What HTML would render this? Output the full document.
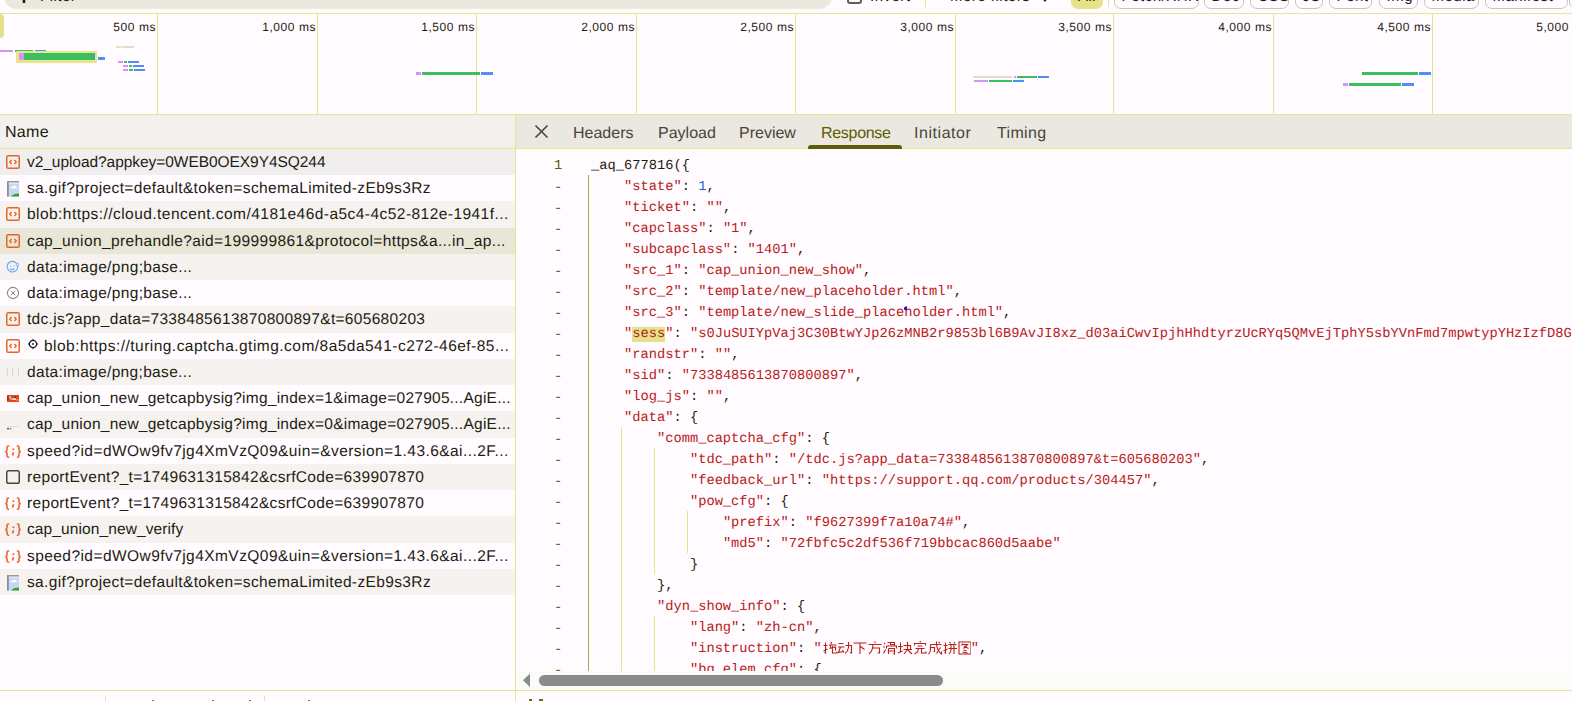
<!DOCTYPE html>
<html><head><meta charset="utf-8"><style>
*{margin:0;padding:0;box-sizing:border-box}
html,body{text-rendering:geometricPrecision;width:1572px;height:701px;overflow:hidden;background:#fffbfe;font-family:"Liberation Sans",sans-serif;color:#1e1c13}
.a{position:absolute}
.yl{position:absolute;background:#e8e58f}
#filter{left:4px;top:-16px;width:828px;height:25px;border-radius:12.5px;background:#ebe8e0}
.chip{position:absolute;top:-17px;height:26px;border:1px solid #c9c6b6;border-radius:7px}
.tl{position:absolute;top:19px;font-size:12px;letter-spacing:0.55px;color:#1e1c13;text-align:right;width:100px;line-height:16px;white-space:nowrap}
.p{background:#d493f7}.g{background:#3cbd5e}.b{background:#4f8ef5}.t{background:#e2dfc8}
.row{position:absolute;left:0;width:515px;overflow:hidden;font-size:15.5px;white-space:nowrap;color:#1e1c13}
.row span.tx{position:absolute;left:27px}
.odd{background:#f5f2f0}
.tab{position:absolute;top:117px;font-size:16px;line-height:33px;color:#47463a;white-space:nowrap}
.cl{position:absolute;left:591px;font-family:"Liberation Mono",monospace;font-size:13.74px;line-height:21px;height:21px;white-space:pre;color:#1e1c13}
.ln{position:absolute;left:554px;width:10px;font-family:"Liberation Mono",monospace;font-size:13.74px;line-height:21px;color:#5e5c0d}
.s{color:#b8211a}.n{color:#1967d2}
.hl{background:#e5e38a}
.gd{position:absolute;width:1px}
</style></head><body>
<div class="a" id="filter"></div>
<svg class="a" style="left:16px;top:-12px" width="16" height="16" viewBox="0 0 16 16"><path d="M1 1 H15 L9.3 8 V15 H6.7 V8 Z" fill="#1e1c13"/></svg>
<div class="a" style="left:40px;top:-10.70px;font-size:15px;line-height:15px;color:#1e1c13;white-space:nowrap;letter-spacing:0.5px">Filter</div>
<div class="a" style="left:847px;top:-11px;width:15px;height:15px;border:2px solid #5e5d52;border-radius:3px"></div>
<div class="a" style="left:870px;top:-10.70px;font-size:15px;line-height:15px;color:#1e1c13;white-space:nowrap;letter-spacing:0.5px">Invert</div>
<div class="yl" style="left:925px;top:0;width:1px;height:7px"></div>
<div class="a" style="left:950px;top:-10.70px;font-size:15px;line-height:15px;color:#1e1c13;white-space:nowrap;letter-spacing:0.5px">More filters</div>
<svg class="a" style="left:1041px;top:-3px" width="8" height="6" viewBox="0 0 8 6"><path d="M0 0 H8 L4 5 Z" fill="#1e1c13"/></svg>
<div class="a" style="left:1071px;top:-17px;width:32px;height:26px;border-radius:7px;background:#e5e38a"></div>
<div class="a" style="left:1078px;top:-10.70px;font-size:15px;line-height:15px;color:#1e1c13;white-space:nowrap;letter-spacing:0.5px">All</div>
<div class="yl" style="left:1108px;top:0;width:1px;height:7px"></div>
<div class="chip" style="left:1114px;width:85px"></div>
<div class="a" style="left:1121.5px;top:-10.70px;font-size:15px;line-height:15px;color:#1e1c13;white-space:nowrap;letter-spacing:0.5px">Fetch/XHR</div>
<div class="chip" style="left:1204px;width:40px"></div>
<div class="a" style="left:1211.5px;top:-10.70px;font-size:15px;line-height:15px;color:#1e1c13;white-space:nowrap;letter-spacing:0.5px">Doc</div>
<div class="chip" style="left:1250px;width:39px"></div>
<div class="a" style="left:1257.5px;top:-10.70px;font-size:15px;line-height:15px;color:#1e1c13;white-space:nowrap;letter-spacing:0.5px">CSS</div>
<div class="chip" style="left:1295px;width:28px"></div>
<div class="a" style="left:1302.5px;top:-10.70px;font-size:15px;line-height:15px;color:#1e1c13;white-space:nowrap;letter-spacing:0.5px">JS</div>
<div class="chip" style="left:1329px;width:43px"></div>
<div class="a" style="left:1336.5px;top:-10.70px;font-size:15px;line-height:15px;color:#1e1c13;white-space:nowrap;letter-spacing:0.5px">Font</div>
<div class="chip" style="left:1379px;width:39px"></div>
<div class="a" style="left:1386.5px;top:-10.70px;font-size:15px;line-height:15px;color:#1e1c13;white-space:nowrap;letter-spacing:0.5px">Img</div>
<div class="chip" style="left:1424px;width:55px"></div>
<div class="a" style="left:1431.5px;top:-10.70px;font-size:15px;line-height:15px;color:#1e1c13;white-space:nowrap;letter-spacing:0.5px">Media</div>
<div class="chip" style="left:1485px;width:83px"></div>
<div class="a" style="left:1492.5px;top:-10.70px;font-size:15px;line-height:15px;color:#1e1c13;white-space:nowrap;letter-spacing:0.5px">Manifest</div>
<div class="chip" style="left:1569px;width:51px"></div>
<div class="a" style="left:1576.5px;top:-10.70px;font-size:15px;line-height:15px;color:#1e1c13;white-space:nowrap;letter-spacing:0.5px">WS</div>
<div class="yl" style="left:0;top:13px;width:1572px;height:1px"></div>
<div class="yl" style="left:0;top:114px;width:1572px;height:1px"></div>
<div class="yl" style="left:157px;top:14px;width:1px;height:100px"></div>
<div class="tl" style="left:56px">500 ms</div>
<div class="yl" style="left:317px;top:14px;width:1px;height:100px"></div>
<div class="tl" style="left:216px">1,000 ms</div>
<div class="yl" style="left:476px;top:14px;width:1px;height:100px"></div>
<div class="tl" style="left:375px">1,500 ms</div>
<div class="yl" style="left:636px;top:14px;width:1px;height:100px"></div>
<div class="tl" style="left:535px">2,000 ms</div>
<div class="yl" style="left:795px;top:14px;width:1px;height:100px"></div>
<div class="tl" style="left:694px">2,500 ms</div>
<div class="yl" style="left:955px;top:14px;width:1px;height:100px"></div>
<div class="tl" style="left:854px">3,000 ms</div>
<div class="yl" style="left:1113px;top:14px;width:1px;height:100px"></div>
<div class="tl" style="left:1012px">3,500 ms</div>
<div class="yl" style="left:1273px;top:14px;width:1px;height:100px"></div>
<div class="tl" style="left:1172px">4,000 ms</div>
<div class="yl" style="left:1432px;top:14px;width:1px;height:100px"></div>
<div class="tl" style="left:1331px">4,500 ms</div>
<div class="tl" style="left:1490px">5,000 ms</div>
<div class="a" style="left:-4px;top:14px;width:7.5px;height:24px;border-radius:4px;background:#e3e08a"></div>
<div class="a p" style="left:0px;top:50px;width:13px;height:2px;"></div>
<div class="a g" style="left:14.5px;top:50px;width:18.5px;height:2px;"></div>
<div class="a b" style="left:35px;top:50px;width:11px;height:2px;"></div>
<div class="a" style="left:16px;top:51px;width:81px;height:12px;background:#e8e48a"></div>
<div class="a p" style="left:19px;top:53px;width:5px;height:7px;"></div>
<div class="a g" style="left:24px;top:53px;width:69.5px;height:7px;"></div>
<div class="a b" style="left:93.5px;top:53px;width:1.5px;height:7px;"></div>
<div class="a b" style="left:97.5px;top:57px;width:7.5px;height:3px;"></div>
<div class="a t" style="left:116px;top:46px;width:5px;height:2px;"></div>
<div class="a t" style="left:122px;top:46px;width:11.5px;height:2px;"></div>
<div class="a p" style="left:118px;top:61px;width:5px;height:2px;"></div>
<div class="a g" style="left:124px;top:61px;width:3px;height:2px;"></div>
<div class="a b" style="left:128px;top:61px;width:11px;height:2px;"></div>
<div class="a p" style="left:123px;top:65px;width:4.5px;height:2px;"></div>
<div class="a g" style="left:128.5px;top:65px;width:3.5px;height:2px;"></div>
<div class="a b" style="left:133px;top:65px;width:11px;height:2px;"></div>
<div class="a p" style="left:123px;top:68.5px;width:5px;height:2px;"></div>
<div class="a g" style="left:129px;top:68.5px;width:4px;height:2px;"></div>
<div class="a b" style="left:134px;top:68.5px;width:11px;height:2px;"></div>
<div class="a p" style="left:416px;top:72px;width:5px;height:3px;"></div>
<div class="a g" style="left:422px;top:72px;width:58px;height:3px;"></div>
<div class="a b" style="left:481px;top:72px;width:12px;height:3px;"></div>
<div class="a t" style="left:973px;top:76px;width:39px;height:2px;"></div>
<div class="a p" style="left:1013.5px;top:76px;width:2.5px;height:2px;"></div>
<div class="a g" style="left:1017px;top:76px;width:19.5px;height:2px;"></div>
<div class="a b" style="left:1037.5px;top:76px;width:11.5px;height:2px;"></div>
<div class="a p" style="left:974px;top:80px;width:13.5px;height:2px;"></div>
<div class="a g" style="left:988.5px;top:80px;width:23.0px;height:2px;"></div>
<div class="a b" style="left:1012.5px;top:80px;width:11.5px;height:2px;"></div>
<div class="a g" style="left:1362px;top:72px;width:56px;height:3px;"></div>
<div class="a b" style="left:1419px;top:72px;width:11.5px;height:3px;"></div>
<div class="a p" style="left:1343px;top:83px;width:5px;height:3px;"></div>
<div class="a g" style="left:1349px;top:83px;width:52px;height:3px;"></div>
<div class="a b" style="left:1402px;top:83px;width:11.5px;height:3px;"></div>
<div class="a" style="left:0;top:115px;width:515px;height:33px;background:#f3f1ed"></div>
<div class="a" style="left:5px;top:116px;font-size:16px;line-height:33px;letter-spacing:0.3px">Name</div>
<div class="yl" style="left:0;top:148px;width:1572px;height:1px"></div>
<div class="row" style="top:148.75px;height:26.25px;background:#f1eef0"><svg class="a" style="left:6px;top:6px" width="14" height="14" viewBox="0 0 14 14"><rect x="0.75" y="0.75" width="12.5" height="12.5" rx="1.5" fill="none" stroke="#e8652a" stroke-width="1.5"/><path d="M5.5 5 L3.8 7 L5.5 9 M8.5 5 L10.2 7 L8.5 9" fill="none" stroke="#e8652a" stroke-width="1.4"/></svg><span class="tx" style="left:27px;top:4px;line-height:19px;letter-spacing:-0.056px">v2_upload?appkey=0WEB0OEX9Y4SQ244</span></div>
<div class="row" style="top:175.0px;height:26.25px;"><svg class="a" style="left:7px;top:6px" width="12" height="16" viewBox="0 0 12 16"><rect x="0" y="0" width="12" height="15.5" fill="#c6d8f3"/><rect x="0" y="0" width="1.8" height="15.5" fill="#8e8e8e"/><rect x="0" y="0" width="12" height="1.6" fill="#9a9a9a"/><rect x="1.8" y="1.6" width="10.2" height="1.4" fill="#dfe8f8"/><path d="M3.2 7.3 Q3.4 5.6 5.2 5.9 Q6.3 4 8.3 4.9 Q9.8 5.2 10 7.3 Z" fill="#fff"/><path d="M4 15.5 Q6.5 12.5 12 12.6 L12 15.5 Z" fill="#3b9f2e"/></svg><span class="tx" style="left:27px;top:4px;line-height:19px;letter-spacing:0.368px">sa.gif?project=default&amp;token=schemaLimited-zEb9s3Rz</span></div>
<div class="row" style="top:201.25px;height:26.25px;background:#f5f2f0"><svg class="a" style="left:6px;top:6px" width="14" height="14" viewBox="0 0 14 14"><rect x="0.75" y="0.75" width="12.5" height="12.5" rx="1.5" fill="none" stroke="#e8652a" stroke-width="1.5"/><path d="M5.5 5 L3.8 7 L5.5 9 M8.5 5 L10.2 7 L8.5 9" fill="none" stroke="#e8652a" stroke-width="1.4"/></svg><span class="tx" style="left:27px;top:4px;line-height:19px;letter-spacing:0.452px">blob:https://cloud.tencent.com/4181e46d-a5c4-4c52-812e-1941f...</span></div>
<div class="row" style="top:227.5px;height:26.25px;background:#e8e6d7"><svg class="a" style="left:6px;top:6px" width="14" height="14" viewBox="0 0 14 14"><rect x="0.75" y="0.75" width="12.5" height="12.5" rx="1.5" fill="none" stroke="#e8652a" stroke-width="1.5"/><path d="M5.5 5 L3.8 7 L5.5 9 M8.5 5 L10.2 7 L8.5 9" fill="none" stroke="#e8652a" stroke-width="1.4"/></svg><span class="tx" style="left:27px;top:4px;line-height:19px;letter-spacing:0.375px">cap_union_prehandle?aid=199999861&amp;protocol=https&amp;a...in_ap...</span></div>
<div class="row" style="top:253.75px;height:26.25px;background:#f5f2f0"><svg class="a" style="left:6px;top:6px" width="14" height="14" viewBox="0 0 14 14"><path d="M10.6 3.4 A5.3 5.3 0 1 0 11.6 5.6" fill="none" stroke="#6aa6f6" stroke-width="1.1"/><circle cx="11.4" cy="4.4" r="1.2" fill="none" stroke="#6aa6f6" stroke-width="0.9"/><path d="M4.6 5.6V6.6 M8.2 5.6V6.6" stroke="#6aa6f6" stroke-width="1"/><path d="M4.6 8.4 Q6.4 11.2 8.2 8.4" fill="none" stroke="#6aa6f6" stroke-width="1.1"/></svg><span class="tx" style="left:27px;top:4px;line-height:19px;letter-spacing:0.343px">data:image/png;base...</span></div>
<div class="row" style="top:280.0px;height:26.25px;"><svg class="a" style="left:6px;top:6px" width="14" height="14" viewBox="0 0 14 14"><circle cx="7" cy="7" r="5.6" fill="none" stroke="#8a8a8a" stroke-width="1.1"/><path d="M4.8 4.8 L9.2 9.2 M9.2 4.8 L4.8 9.2" stroke="#8a8a8a" stroke-width="1"/></svg><span class="tx" style="left:27px;top:4px;line-height:19px;letter-spacing:0.343px">data:image/png;base...</span></div>
<div class="row" style="top:306.25px;height:26.25px;background:#f5f2f0"><svg class="a" style="left:6px;top:6px" width="14" height="14" viewBox="0 0 14 14"><rect x="0.75" y="0.75" width="12.5" height="12.5" rx="1.5" fill="none" stroke="#e8652a" stroke-width="1.5"/><path d="M5.5 5 L3.8 7 L5.5 9 M8.5 5 L10.2 7 L8.5 9" fill="none" stroke="#e8652a" stroke-width="1.4"/></svg><span class="tx" style="left:27px;top:4px;line-height:19px;letter-spacing:0.313px">tdc.js?app_data=7338485613870800897&amp;t=605680203</span></div>
<div class="row" style="top:332.5px;height:26.25px;"><svg class="a" style="left:6px;top:6px" width="14" height="14" viewBox="0 0 14 14"><rect x="0.75" y="0.75" width="12.5" height="12.5" rx="1.5" fill="none" stroke="#e8652a" stroke-width="1.5"/><path d="M5.5 5 L3.8 7 L5.5 9 M8.5 5 L10.2 7 L8.5 9" fill="none" stroke="#e8652a" stroke-width="1.4"/></svg><svg class="a" style="left:27px;top:5.5px" width="12" height="12" viewBox="0 0 12 12"><circle cx="6" cy="6" r="3.6" fill="none" stroke="#1a1a2e" stroke-width="1.3"/><circle cx="6" cy="6" r="0.9" fill="#1a1a2e"/><path d="M5 2.4 L6 0.6 L7 2.4 Z M5 9.6 L6 11.4 L7 9.6 Z M2.4 5 L0.6 6 L2.4 7 Z M9.6 5 L11.4 6 L9.6 7 Z" fill="#1a1a2e"/></svg><span class="tx" style="left:44px;top:4px;line-height:19px;letter-spacing:0.472px">blob:https://turing.captcha.gtimg.com/8a5da541-c272-46ef-85...</span></div>
<div class="row" style="top:358.75px;height:26.25px;background:#f5f2f0"><svg class="a" style="left:6px;top:8px" width="14" height="10" viewBox="0 0 14 10"><path d="M1.4 0.5V8.5 M6.6 0.5V8.5 M12.4 0.5V8.5" stroke="#d6d3ce" stroke-width="1"/></svg><span class="tx" style="left:27px;top:4px;line-height:19px;letter-spacing:0.333px">data:image/png;base...</span></div>
<div class="row" style="top:385.0px;height:26.25px;"><svg class="a" style="left:7px;top:10px" width="12" height="8" viewBox="0 0 12 8"><rect width="12" height="7" fill="#e2481c"/><rect x="0" y="1.5" width="1.6" height="4" fill="#9a2a10"/><rect x="2" y="1.5" width="2" height="2" fill="#f7c2a8"/><rect x="3.5" y="3.5" width="2.5" height="1.5" fill="#f4a888"/><rect x="7.5" y="1.5" width="1.5" height="1.5" fill="#5a1a10"/><rect x="6" y="3" width="3" height="2" fill="#f9d0b8"/><rect x="9.5" y="4" width="2" height="2" fill="#f08860"/><rect x="3" y="0" width="1" height="1" fill="#7080d0"/></svg><span class="tx" style="left:27px;top:4px;line-height:19px;letter-spacing:0.251px">cap_union_new_getcapbysig?img_index=1&amp;image=027905...AgiE...</span></div>
<div class="row" style="top:411.25px;height:26.25px;background:#f5f2f0"><svg class="a" style="left:6px;top:15px" width="14" height="5" viewBox="0 0 14 5"><rect x="1" y="0" width="12" height="1" fill="#e2dfdc"/><rect x="1" y="2" width="2.2" height="1.3" fill="#2050d8"/><rect x="4" y="2" width="1.3" height="1.6" fill="#f06a48"/></svg><span class="tx" style="left:27px;top:4px;line-height:19px;letter-spacing:0.251px">cap_union_new_getcapbysig?img_index=0&amp;image=027905...AgiE...</span></div>
<div class="row" style="top:437.5px;height:26.25px;"><svg class="a" style="left:4px;top:7px" width="18" height="14" viewBox="0 0 18 14"><path d="M5.2 1 H4.4 Q3 1 3 2.6 V4.8 Q3 6.4 1.3 6.6 Q3 6.8 3 8.4 V10.6 Q3 12.2 4.4 12.2 H5.2 M12.8 1 H13.6 Q15 1 15 2.6 V4.8 Q15 6.4 16.7 6.6 Q15 6.8 15 8.4 V10.6 Q15 12.2 13.6 12.2 H12.8" fill="none" stroke="#e8652a" stroke-width="1.6"/><circle cx="9.4" cy="4.3" r="1.05" fill="#e8652a"/><path d="M9.6 7.2 L8.5 10.6" stroke="#e8652a" stroke-width="1.7"/></svg><span class="tx" style="left:27px;top:4px;line-height:19px;letter-spacing:0.439px">speed?id=dWOw9fv7jg4XmVzQ09&amp;uin=&amp;version=1.43.6&amp;ai...2F...</span></div>
<div class="row" style="top:463.75px;height:26.25px;background:#f5f2f0"><svg class="a" style="left:6px;top:6px" width="14" height="14" viewBox="0 0 14 14"><rect x="0.75" y="0.75" width="12.5" height="12.5" rx="1.8" fill="none" stroke="#4a4940" stroke-width="1.5"/></svg><span class="tx" style="left:27px;top:4px;line-height:19px;letter-spacing:0.326px">reportEvent?_t=1749631315842&amp;csrfCode=639907870</span></div>
<div class="row" style="top:490.0px;height:26.25px;"><svg class="a" style="left:4px;top:7px" width="18" height="14" viewBox="0 0 18 14"><path d="M5.2 1 H4.4 Q3 1 3 2.6 V4.8 Q3 6.4 1.3 6.6 Q3 6.8 3 8.4 V10.6 Q3 12.2 4.4 12.2 H5.2 M12.8 1 H13.6 Q15 1 15 2.6 V4.8 Q15 6.4 16.7 6.6 Q15 6.8 15 8.4 V10.6 Q15 12.2 13.6 12.2 H12.8" fill="none" stroke="#e8652a" stroke-width="1.6"/><circle cx="9.4" cy="4.3" r="1.05" fill="#e8652a"/><path d="M9.6 7.2 L8.5 10.6" stroke="#e8652a" stroke-width="1.7"/></svg><span class="tx" style="left:27px;top:4px;line-height:19px;letter-spacing:0.326px">reportEvent?_t=1749631315842&amp;csrfCode=639907870</span></div>
<div class="row" style="top:516.25px;height:26.25px;background:#f5f2f0"><svg class="a" style="left:4px;top:7px" width="18" height="14" viewBox="0 0 18 14"><path d="M5.2 1 H4.4 Q3 1 3 2.6 V4.8 Q3 6.4 1.3 6.6 Q3 6.8 3 8.4 V10.6 Q3 12.2 4.4 12.2 H5.2 M12.8 1 H13.6 Q15 1 15 2.6 V4.8 Q15 6.4 16.7 6.6 Q15 6.8 15 8.4 V10.6 Q15 12.2 13.6 12.2 H12.8" fill="none" stroke="#e8652a" stroke-width="1.6"/><circle cx="9.4" cy="4.3" r="1.05" fill="#e8652a"/><path d="M9.6 7.2 L8.5 10.6" stroke="#e8652a" stroke-width="1.7"/></svg><span class="tx" style="left:27px;top:4px;line-height:19px;letter-spacing:0.105px">cap_union_new_verify</span></div>
<div class="row" style="top:542.5px;height:26.25px;"><svg class="a" style="left:4px;top:7px" width="18" height="14" viewBox="0 0 18 14"><path d="M5.2 1 H4.4 Q3 1 3 2.6 V4.8 Q3 6.4 1.3 6.6 Q3 6.8 3 8.4 V10.6 Q3 12.2 4.4 12.2 H5.2 M12.8 1 H13.6 Q15 1 15 2.6 V4.8 Q15 6.4 16.7 6.6 Q15 6.8 15 8.4 V10.6 Q15 12.2 13.6 12.2 H12.8" fill="none" stroke="#e8652a" stroke-width="1.6"/><circle cx="9.4" cy="4.3" r="1.05" fill="#e8652a"/><path d="M9.6 7.2 L8.5 10.6" stroke="#e8652a" stroke-width="1.7"/></svg><span class="tx" style="left:27px;top:4px;line-height:19px;letter-spacing:0.439px">speed?id=dWOw9fv7jg4XmVzQ09&amp;uin=&amp;version=1.43.6&amp;ai...2F...</span></div>
<div class="row" style="top:568.75px;height:26.25px;background:#f5f2f0"><svg class="a" style="left:7px;top:6px" width="12" height="16" viewBox="0 0 12 16"><rect x="0" y="0" width="12" height="15.5" fill="#c6d8f3"/><rect x="0" y="0" width="1.8" height="15.5" fill="#8e8e8e"/><rect x="0" y="0" width="12" height="1.6" fill="#9a9a9a"/><rect x="1.8" y="1.6" width="10.2" height="1.4" fill="#dfe8f8"/><path d="M3.2 7.3 Q3.4 5.6 5.2 5.9 Q6.3 4 8.3 4.9 Q9.8 5.2 10 7.3 Z" fill="#fff"/><path d="M4 15.5 Q6.5 12.5 12 12.6 L12 15.5 Z" fill="#3b9f2e"/></svg><span class="tx" style="left:27px;top:4px;line-height:19px;letter-spacing:0.37px">sa.gif?project=default&amp;token=schemaLimited-zEb9s3Rz</span></div>
<div class="yl" style="left:515px;top:115px;width:1px;height:586px"></div>
<div class="a" style="left:516px;top:115px;width:1056px;height:33px;background:#ebe8e2"></div>
<svg class="a" style="left:534px;top:124px" width="15" height="15" viewBox="0 0 15 15"><path d="M1.5 1.5 L13.5 13.5 M13.5 1.5 L1.5 13.5" stroke="#47463a" stroke-width="1.6"/></svg>
<div class="tab" style="left:573px;color:#47463a;letter-spacing:0px">Headers</div>
<div class="tab" style="left:658px;color:#47463a;letter-spacing:0px">Payload</div>
<div class="tab" style="left:739px;color:#47463a;letter-spacing:0px">Preview</div>
<div class="tab" style="left:821px;color:#5e5c00;letter-spacing:-0.3px">Response</div>
<div class="tab" style="left:914px;color:#47463a;letter-spacing:0.55px">Initiator</div>
<div class="tab" style="left:997px;color:#47463a;letter-spacing:0.35px">Timing</div>
<div class="a" style="left:808px;top:145px;width:94px;height:4px;background:#5f5c0b;border-radius:3px 3px 0 0"></div>
<div class="a" style="left:516px;top:149px;width:1056px;height:522px;overflow:hidden">
<div class="ln" style="top:6.5px;left:38px">1</div>
<div class="cl" style="top:6.5px;left:75px">_aq_677816({</div>
<div class="ln" style="top:28.5px;left:38px">-</div>
<div class="cl" style="top:27.5px;left:75px">    <span class="s">&quot;state&quot;</span>: <span class="n">1</span>,</div>
<div class="ln" style="top:49.5px;left:38px">-</div>
<div class="cl" style="top:48.5px;left:75px">    <span class="s">&quot;ticket&quot;</span>: <span class="s">&quot;&quot;</span>,</div>
<div class="ln" style="top:70.5px;left:38px">-</div>
<div class="cl" style="top:69.5px;left:75px">    <span class="s">&quot;capclass&quot;</span>: <span class="s">&quot;1&quot;</span>,</div>
<div class="ln" style="top:91.5px;left:38px">-</div>
<div class="cl" style="top:90.5px;left:75px">    <span class="s">&quot;subcapclass&quot;</span>: <span class="s">&quot;1401&quot;</span>,</div>
<div class="ln" style="top:112.5px;left:38px">-</div>
<div class="cl" style="top:111.5px;left:75px">    <span class="s">&quot;src_1&quot;</span>: <span class="s">&quot;cap_union_new_show&quot;</span>,</div>
<div class="ln" style="top:133.5px;left:38px">-</div>
<div class="cl" style="top:132.5px;left:75px">    <span class="s">&quot;src_2&quot;</span>: <span class="s">&quot;template/new_placeholder.html&quot;</span>,</div>
<div class="ln" style="top:154.5px;left:38px">-</div>
<div class="cl" style="top:153.5px;left:75px">    <span class="s">&quot;src_3&quot;</span>: <span class="s">&quot;template/new_slide_placeholder.html&quot;</span>,</div>
<div class="ln" style="top:175.5px;left:38px">-</div>
<div class="cl" style="top:174.5px;left:75px">    <span class="s">"<span class="hl">sess</span>"</span>: <span class="s">&quot;s0JuSUIYpVaj3C30BtwYJp26zMNB2r9853bl6B9AvJI8xz_d03aiCwvIpjhHhdtyrzUcRYq5QMvEjTphY5sbYVnFmd7mpwtypYHzIzfD8GxYz&quot;</span></div>
<div class="ln" style="top:196.5px;left:38px">-</div>
<div class="cl" style="top:195.5px;left:75px">    <span class="s">&quot;randstr&quot;</span>: <span class="s">&quot;&quot;</span>,</div>
<div class="ln" style="top:217.5px;left:38px">-</div>
<div class="cl" style="top:216.5px;left:75px">    <span class="s">&quot;sid&quot;</span>: <span class="s">&quot;7338485613870800897&quot;</span>,</div>
<div class="ln" style="top:238.5px;left:38px">-</div>
<div class="cl" style="top:237.5px;left:75px">    <span class="s">&quot;log_js&quot;</span>: <span class="s">&quot;&quot;</span>,</div>
<div class="ln" style="top:259.5px;left:38px">-</div>
<div class="cl" style="top:258.5px;left:75px">    <span class="s">&quot;data&quot;</span>: {</div>
<div class="ln" style="top:280.5px;left:38px">-</div>
<div class="cl" style="top:279.5px;left:75px">        <span class="s">&quot;comm_captcha_cfg&quot;</span>: {</div>
<div class="ln" style="top:301.5px;left:38px">-</div>
<div class="cl" style="top:300.5px;left:75px">            <span class="s">&quot;tdc_path&quot;</span>: <span class="s">&quot;/tdc.js?app_data=7338485613870800897&amp;t=605680203&quot;</span>,</div>
<div class="ln" style="top:322.5px;left:38px">-</div>
<div class="cl" style="top:321.5px;left:75px">            <span class="s">&quot;feedback_url&quot;</span>: <span class="s">&quot;https://support.qq.com/products/304457&quot;</span>,</div>
<div class="ln" style="top:343.5px;left:38px">-</div>
<div class="cl" style="top:342.5px;left:75px">            <span class="s">&quot;pow_cfg&quot;</span>: {</div>
<div class="ln" style="top:364.5px;left:38px">-</div>
<div class="cl" style="top:363.5px;left:75px">                <span class="s">&quot;prefix&quot;</span>: <span class="s">&quot;f9627399f7a10a74#&quot;</span>,</div>
<div class="ln" style="top:385.5px;left:38px">-</div>
<div class="cl" style="top:384.5px;left:75px">                <span class="s">&quot;md5&quot;</span>: <span class="s">&quot;72fbfc5c2df536f719bbcac860d5aabe&quot;</span></div>
<div class="ln" style="top:406.5px;left:38px">-</div>
<div class="cl" style="top:405.5px;left:75px">            }</div>
<div class="ln" style="top:427.5px;left:38px">-</div>
<div class="cl" style="top:426.5px;left:75px">        },</div>
<div class="ln" style="top:448.5px;left:38px">-</div>
<div class="cl" style="top:447.5px;left:75px">        <span class="s">&quot;dyn_show_info&quot;</span>: {</div>
<div class="ln" style="top:469.5px;left:38px">-</div>
<div class="cl" style="top:468.5px;left:75px">            <span class="s">&quot;lang&quot;</span>: <span class="s">&quot;zh-cn&quot;</span>,</div>
<div class="ln" style="top:490.5px;left:38px">-</div>
<div class="cl" style="top:489.5px;left:75px">            <span class="s">&quot;instruction&quot;</span>: <span class="s">"<svg style="display:inline-block;vertical-align:top" width="149" height="21" viewBox="0 0 149 21"><g transform="translate(0.5,1.5)" fill="none" stroke="#b8211a" stroke-width="1.1"><path transform="translate(0,0)" d="M1 5H5 M3 2V12.5L2 12 M1 10.5L5 8.5 M9 1.5L8.5 3.5 M6.5 4.5H14 M8 4.5V8 M7 8L13 6.5V10 M10 5.5V12.5H14.5V11"/><path transform="translate(15,0)" d="M1 3H6 M0.5 6.5H7 M3 6.5L1 12L6 11 M5 9.5L6.5 12 M8 5H14V12.5L12.5 12 M11 1.5V7Q10.5 11 7.5 13"/><path transform="translate(30,0)" d="M1 2.5H14 M7.5 2.5V13.5 M8 6L12 9"/><path transform="translate(45,0)" d="M7 1L8 2.5 M1 4H14 M5.5 4Q5.5 10 1.5 13.5 M5.5 7.5H12V12.5L10 12.5"/><path transform="translate(60,0)" d="M1.5 2.5L2.5 3.5 M1 6L2 7 M1 13L3 9 M5 2H12V5 M8 2V4H12 M4 5.5V8 M4 5.5H14V8 M6 8H12V13.5L11 13 M6 8V13.5 M6 10.5H12"/><path transform="translate(75,0)" d="M0.5 6H5 M3 2V11 M0.5 12.5L5 10.5 M6 5H13V9 M10 1.5V9 M6 9H14.5 M10 9L6.5 13.5 M10.5 9.5L14.5 13.5"/><path transform="translate(90,0)" d="M7.5 0.5L8 2 M2 5V3H13V5 M5 5.5H10 M3 8H12 M6 8L5 11.5L2 13.5 M9 8V12.5H13.5V11"/><path transform="translate(105,0)" d="M3 4V9Q3 12 1 13.5 M3 4H14 M3 7H7V11L6 11 M9 1V4Q9.5 10 14 13.5V11 M13 7L9 13 M11 1.5L12.5 2.5"/><path transform="translate(120,0)" d="M1 5H5 M3 2V12.5L2 12 M1 10.5L5 8.5 M7 1.5L8 3 M12.5 1.5L11.5 3 M6 4H14 M6 8H14.5 M8.5 4V9Q8.5 12 6.5 13.5 M11.5 4V13.5"/><path transform="translate(135,0)" d="M1.5 1.5H13.5V13.5H1.5Z M5.5 3L4 5 M5 4H10L6 8 M6.5 5.5L11 8 M6 9.5L9 10.5 M5 11.5L10 12.5"/></g></svg>"</span>,</div>
<div class="ln" style="top:511.5px;left:38px">-</div>
<div class="cl" style="top:510.5px;left:75px">            <span class="s">&quot;bg_elem_cfg&quot;</span>: {</div>
<div class="gd" style="left:72px;top:26px;height:525px;background:#aaa853"></div>
<div class="gd" style="left:105px;top:278px;height:273px;background:#e6e28e"></div>
<div class="gd" style="left:138px;top:299px;height:126px;background:#e6e28e"></div>
<div class="gd" style="left:171px;top:362px;height:42px;background:#e6e28e"></div>
<div class="gd" style="left:138px;top:467px;height:84px;background:#e6e28e"></div>
</div>
<div class="a" style="left:904px;top:307px;width:3px;height:3px;background:#1010f0;border-radius:1px"></div>
<div class="a" style="left:516px;top:671px;width:1056px;height:19px;background:#fbfbfa"></div>
<svg class="a" style="left:522px;top:673px" width="9" height="15" viewBox="0 0 9 15"><path d="M8 0.5 V14 L1 7.2 Z" fill="#8a8a8a"/></svg>
<div class="a" style="left:539px;top:675px;width:404px;height:11px;border-radius:5.5px;background:#8a8a8a"></div>
<div class="yl" style="left:0;top:690px;width:1572px;height:1px"></div>
<div class="yl" style="left:105px;top:696px;width:1px;height:5px"></div>
<div class="yl" style="left:264px;top:696px;width:1px;height:5px"></div>
<div class="a" style="left:152px;top:700px;width:2px;height:1px;background:#7a786c"></div>
<div class="a" style="left:212px;top:700px;width:2px;height:1px;background:#7a786c"></div>
<div class="a" style="left:249px;top:700px;width:2px;height:1px;background:#7a786c"></div>
<div class="a" style="left:308px;top:700px;width:2px;height:1px;background:#7a786c"></div>
<div class="a" style="left:529px;top:699px;width:3px;height:2px;background:#6b690f"></div>
<div class="a" style="left:539px;top:699px;width:4px;height:2px;background:#6b690f"></div>
</body></html>
